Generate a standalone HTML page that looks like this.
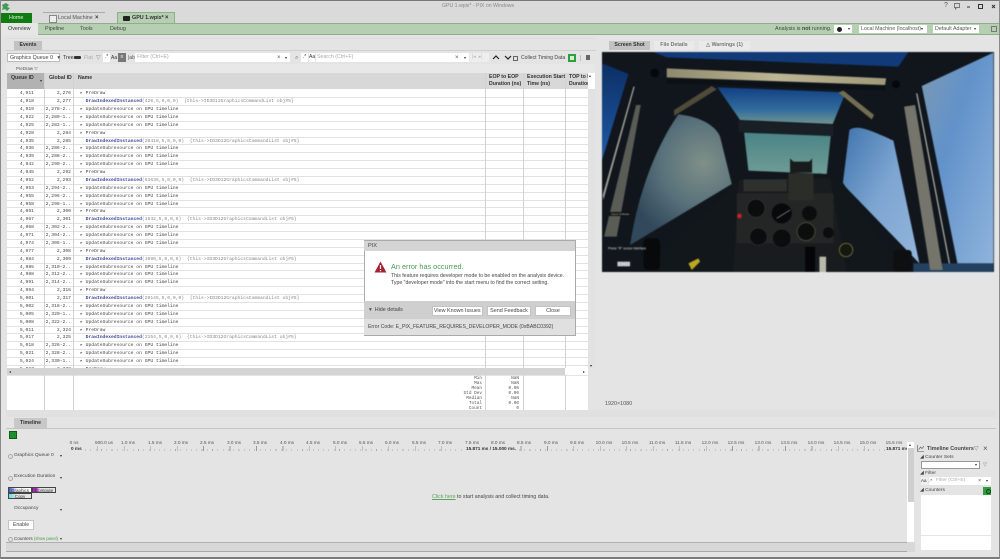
<!DOCTYPE html>
<html><head><meta charset="utf-8"><style>
html,body{margin:0;padding:0}
body{width:1000px;height:559px;overflow:hidden;background:#e4e4e4;position:relative;font-family:"Liberation Sans",sans-serif;color:#333}
div,span,a{position:absolute;white-space:nowrap}
.t{font-size:5.3px;line-height:8px}
.b{font-weight:bold}
.f{background:#fff}
#rows{left:7px;top:89px;width:581px;height:279px;background:#fff;overflow:hidden}
.r{position:relative;height:7.88px;width:581px;box-sizing:border-box;border-bottom:1px solid #e2e2e2;font:4.7px/7.4px "Liberation Mono",monospace;color:#444}
.r b,.r i,.r u{position:absolute;font-weight:normal;font-style:normal;text-decoration:none;top:0}
.r b{right:554px}.r i{right:517px;text-align:right}
.r u{left:73px}
.r em{font-style:normal;color:#3c4a9c;font-weight:bold}.r s{text-decoration:none;color:#888}
.v{width:1px;background:#d2d2d2}
.st{font:4.4px/5px "Liberation Mono",monospace;color:#555;text-align:right}
.tm{top:440px;font-size:4.7px;line-height:6px;color:#555;transform:translateX(-50%)}
.btn{background:#fff;border:1px solid #c4c4c4;box-sizing:border-box;font-size:5.4px;text-align:center;color:#444}
</style></head><body>
<!-- chrome -->
<div style="left:0;top:0;width:1000px;height:1px;background:#777"></div>
<div style="left:0;top:1px;width:1000px;height:22px;background:#dadada"></div>
<svg style="position:absolute;left:2px;top:3px" width="9" height="8" viewBox="0 0 9 8"><path d="M4 0l3 2-2 2 3 1-3 3-2-2-3 1 1-3-1-2z" fill="#3f9a55"/></svg>
<div class="t" style="left:442px;top:2px;color:#888;font-size:5.2px">GPU 1.wpix* - PIX on Windows</div>
<div class="t" style="left:944px;top:2px;font-size:7px;color:#555">?</div>
<svg style="position:absolute;left:954px;top:3px" width="46" height="8" viewBox="0 0 46 8"><path d="M0.5 .5h5v4h-3l-1 1.500v-1.500h-1z" fill="none" stroke="#555" stroke-width=".7"/><path d="M13 4h3" stroke="#333" stroke-width="1"/><rect x="24.500" y="1.500" width="4" height="4" fill="none" stroke="#333"/><path d="M38 2l3 3m0-3l-3 3" stroke="#333"/></svg>
<div style="left:1px;top:13px;width:31px;height:10px;background:#107c10"></div>
<div class="t" style="left:9px;top:14px;color:#e6f3e6;font-size:5.4px">Home</div>
<div style="left:43px;top:12px;width:62px;height:1px;background:#aaa"></div>
<div style="left:49px;top:15px;width:6px;height:6px;border:1px solid #888;background:#eee"></div>
<div class="t" style="left:58px;top:14px;font-size:5.4px;color:#555">Local Machine</div>
<div class="t b" style="left:95px;top:14px;font-size:6px">×</div>
<div style="left:117px;top:12px;width:58px;height:11px;background:#b6cfb2;border:1px solid #8fae8b;border-bottom:0;box-sizing:border-box"></div>
<div style="left:123px;top:15.500px;width:7px;height:5px;background:#222;border-radius:1px"></div>
<div class="t b" style="left:132px;top:14px;font-size:5.4px;color:#333">GPU 1.wpix*</div>
<div class="t b" style="left:165px;top:14px;font-size:6px">×</div>
<div style="left:0;top:22.500px;width:1000px;height:12px;background:#b6cfb2;border-top:1px solid #8fae8b;border-bottom:1px solid #8fae8b;box-sizing:border-box"></div>
<div style="left:1px;top:23px;width:37px;height:12px;background:#e6e6e6"></div>
<div class="t" style="left:8px;top:25px;font-size:5.4px">Overview</div>
<div class="t" style="left:45px;top:25px;font-size:5.4px;color:#444">Pipeline</div>
<div class="t" style="left:80px;top:25px;font-size:5.4px;color:#444">Tools</div>
<div class="t" style="left:110px;top:25px;font-size:5.4px;color:#444">Debug</div>
<div class="t" style="left:775px;top:25px;font-size:5.4px;color:#444">Analysis is <b>not</b> running.</div>
<div class="f" style="left:834px;top:25px;width:18px;height:8px"></div>
<div style="left:837px;top:26.500px;width:5px;height:5px;border-radius:50%;background:#222"></div>
<div class="t" style="left:848px;top:25px;font-size:4px">▾</div>
<div class="f t" style="left:859px;top:25px;width:68px;height:7.500px;font-size:5.300px;color:#555;text-indent:2px">Local Machine (localhost)</div>
<div class="t" style="left:921px;top:25px;font-size:4px">▾</div>
<div class="f t" style="left:933px;top:25px;width:46px;height:7.500px;font-size:5.300px;color:#555;text-indent:2px">Default Adapter</div>
<div class="t" style="left:974px;top:25px;font-size:4px">▾</div>
<div style="left:991px;top:26px;width:4px;height:4px;border:1px solid #777"></div>

<!-- events panel -->
<div style="left:6px;top:38px;width:589px;height:1px;background:#dcdcdc"></div>
<div class="t b" style="left:14px;top:41px;width:28px;height:9px;background:#c2c2c2;font-size:5.200px;text-align:center;color:#333">Events</div>
<div style="left:6px;top:50px;width:590px;height:1px;background:#d0d0d0"></div>
<div class="f t" style="left:7px;top:53px;width:53px;height:9px;border:1px solid #bbb;box-sizing:border-box;font-size:5.300px;color:#444;text-indent:2px;line-height:8px">Graphics Queue 0 &nbsp; ▾</div>
<div class="t" style="left:63px;top:54px;font-size:5.300px">Tree</div>
<div style="left:74px;top:56px;width:7px;height:3px;background:#333;border-radius:1px"></div>
<div class="t" style="left:84px;top:54px;font-size:5.300px;color:#aaa">Flat</div>
<div class="t" style="left:96px;top:53.500px;font-size:6px;color:#888">▽</div>
<div class="f t" style="left:103px;top:53px;width:7px;height:9px;font-size:5px;text-align:center">.*</div>
<div class="t" style="left:111px;top:54px;font-size:5px">Aa</div>
<div class="t" style="left:118px;top:53px;width:8px;height:9px;background:#777;color:#fff;font-size:5px;text-align:center">≡</div>
<div class="t" style="left:128px;top:53.500px;font-size:5px;color:#555">|ab|</div>
<div class="f t" style="left:135px;top:53px;width:155px;height:9px;font-size:5.300px;color:#aaa;text-indent:2px">Filter (Ctrl+E)</div>
<div class="t" style="left:277px;top:54px;font-size:6px;color:#555">×</div>
<div class="t" style="left:285px;top:54px;font-size:4px">▾</div>
<div class="t" style="left:295px;top:54px;font-size:6px;color:#777">⌕</div>
<div class="f t" style="left:301px;top:53px;width:7px;height:9px;font-size:5px;text-align:center">.*</div>
<div class="f t" style="left:309px;top:53px;width:6px;height:9px;font-size:5px">Aa</div>
<div class="f t" style="left:316px;top:53px;width:153px;height:9px;font-size:5.300px;color:#aaa;text-indent:1px">Search (Ctrl+F)</div>
<div class="t" style="left:455px;top:54px;font-size:6px;color:#555">×</div>
<div class="t" style="left:464px;top:54px;font-size:4px">▾</div>
<div class="t" style="left:470px;top:53px;width:19px;height:9px;color:#bbb;font-size:5px;text-indent:2px;background:#eee">|◂ &nbsp;▸|</div>
<svg style="position:absolute;left:492px;top:54px" width="20" height="7" viewBox="0 0 20 7"><path d="M1 5l3-3 3 3M13 2l3 3 3-3" fill="none" stroke="#222" stroke-width="1.200"/></svg>
<div style="left:513px;top:56px;width:3px;height:3px;border:1px solid #666"></div>
<div class="t" style="left:521px;top:54px;font-size:5.100px;color:#444">Collect Timing Data</div>
<div style="left:568px;top:54px;width:8px;height:8px;background:#2f9e3f"></div>
<div style="left:570px;top:56px;width:4px;height:4px;background:#d5ecd5"></div>
<div style="left:580px;top:55px;width:1px;height:6px;background:#bbb"></div>
<div style="left:586px;top:55px;width:4px;height:5px;background:#666"></div>
<div style="left:6px;top:64px;width:589px;height:9px;background:#e8e8e8"></div>
<div class="t" style="left:16px;top:64.500px;font-size:4.400px;color:#555">PreDraw ▽</div>
<div style="left:7px;top:73px;width:581px;height:16px;background:#d8d8d8"></div>
<div style="left:7px;top:73px;width:37px;height:16px;background:#b2b2b2"></div>
<div class="t b" style="left:11px;top:73.500px;font-size:5.200px">Queue ID</div>
<div class="t" style="left:40px;top:77px;font-size:4px">▾</div>
<div class="t b" style="left:49px;top:73.500px;font-size:5.200px">Global ID</div>
<div class="t b" style="left:78px;top:73.500px;font-size:5.200px">Name</div>
<div class="t b" style="left:489px;top:73.500px;font-size:5.200px;line-height:7px;white-space:pre">EOP to EOP
Duration (ns)</div>
<div class="t b" style="left:527px;top:73.500px;font-size:5.200px;line-height:7px;white-space:pre">Execution Start
Time (ns)</div>
<div class="t b" style="left:569px;top:73.500px;font-size:5.200px;line-height:7px;white-space:pre;width:19px;overflow:hidden">TOP to EOP
Duration</div>
<div class="f" style="left:588px;top:73px;width:7px;height:16px"></div>
<div style="left:588px;top:89px;width:7px;height:279px;background:#e2e2e2"></div>
<div class="t" style="left:589px;top:72px;font-size:4px">▴</div>
<div id="rows"><div style="position:relative;height:1.300px"></div>
<div class="r"><b>4,911</b><i>2,276</i><u>▸ PreDraw</u></div>
<div class="r"><b>4,918</b><i>2,277</i><u>&nbsp; <em>DrawIndexedInstanced</em><s>(420,5,0,0,0) &nbsp;{this-&gt;ID3D12GraphicsCommandList obj#5}</s></u></div>
<div class="r"><b>4,919</b><i>2,278-2..</i><u>▸ UpdateSubresource on GPU timeline</u></div>
<div class="r"><b>4,922</b><i>2,280-1..</i><u>▸ UpdateSubresource on GPU timeline</u></div>
<div class="r"><b>4,925</b><i>2,282-1..</i><u>▸ UpdateSubresource on GPU timeline</u></div>
<div class="r"><b>4,928</b><i>2,284</i><u>▸ PreDraw</u></div>
<div class="r"><b>4,935</b><i>2,285</i><u>&nbsp; <em>DrawIndexedInstanced</em><s>(20418,5,0,0,0) &nbsp;{this-&gt;ID3D12GraphicsCommandList obj#5}</s></u></div>
<div class="r"><b>4,936</b><i>2,286-2..</i><u>▸ UpdateSubresource on GPU timeline</u></div>
<div class="r"><b>4,939</b><i>2,288-2..</i><u>▸ UpdateSubresource on GPU timeline</u></div>
<div class="r"><b>4,942</b><i>2,290-2..</i><u>▸ UpdateSubresource on GPU timeline</u></div>
<div class="r"><b>4,945</b><i>2,292</i><u>▸ PreDraw</u></div>
<div class="r"><b>4,952</b><i>2,293</i><u>&nbsp; <em>DrawIndexedInstanced</em><s>(63636,5,0,0,0) &nbsp;{this-&gt;ID3D12GraphicsCommandList obj#5}</s></u></div>
<div class="r"><b>4,953</b><i>2,294-2..</i><u>▸ UpdateSubresource on GPU timeline</u></div>
<div class="r"><b>4,955</b><i>2,296-2..</i><u>▸ UpdateSubresource on GPU timeline</u></div>
<div class="r"><b>4,958</b><i>2,298-1..</i><u>▸ UpdateSubresource on GPU timeline</u></div>
<div class="r"><b>4,961</b><i>2,300</i><u>▸ PreDraw</u></div>
<div class="r"><b>4,967</b><i>2,301</i><u>&nbsp; <em>DrawIndexedInstanced</em><s>(1632,5,0,0,0) &nbsp;{this-&gt;ID3D12GraphicsCommandList obj#5}</s></u></div>
<div class="r"><b>4,968</b><i>2,302-2..</i><u>▸ UpdateSubresource on GPU timeline</u></div>
<div class="r"><b>4,971</b><i>2,304-2..</i><u>▸ UpdateSubresource on GPU timeline</u></div>
<div class="r"><b>4,974</b><i>2,306-1..</i><u>▸ UpdateSubresource on GPU timeline</u></div>
<div class="r"><b>4,977</b><i>2,308</i><u>▸ PreDraw</u></div>
<div class="r"><b>4,984</b><i>2,309</i><u>&nbsp; <em>DrawIndexedInstanced</em><s>(1080,5,0,0,0) &nbsp;{this-&gt;ID3D12GraphicsCommandList obj#5}</s></u></div>
<div class="r"><b>4,985</b><i>2,310-2..</i><u>▸ UpdateSubresource on GPU timeline</u></div>
<div class="r"><b>4,988</b><i>2,312-2..</i><u>▸ UpdateSubresource on GPU timeline</u></div>
<div class="r"><b>4,991</b><i>2,314-2..</i><u>▸ UpdateSubresource on GPU timeline</u></div>
<div class="r"><b>4,994</b><i>2,316</i><u>▸ PreDraw</u></div>
<div class="r"><b>5,001</b><i>2,317</i><u>&nbsp; <em>DrawIndexedInstanced</em><s>(29145,5,0,0,0) &nbsp;{this-&gt;ID3D12GraphicsCommandList obj#5}</s></u></div>
<div class="r"><b>5,002</b><i>2,318-2..</i><u>▸ UpdateSubresource on GPU timeline</u></div>
<div class="r"><b>5,005</b><i>2,320-1..</i><u>▸ UpdateSubresource on GPU timeline</u></div>
<div class="r"><b>5,008</b><i>2,322-2..</i><u>▸ UpdateSubresource on GPU timeline</u></div>
<div class="r"><b>5,011</b><i>2,324</i><u>▸ PreDraw</u></div>
<div class="r"><b>5,017</b><i>2,325</i><u>&nbsp; <em>DrawIndexedInstanced</em><s>(2154,5,0,0,0) &nbsp;{this-&gt;ID3D12GraphicsCommandList obj#5}</s></u></div>
<div class="r"><b>5,018</b><i>2,326-2..</i><u>▸ UpdateSubresource on GPU timeline</u></div>
<div class="r"><b>5,021</b><i>2,328-2..</i><u>▸ UpdateSubresource on GPU timeline</u></div>
<div class="r"><b>5,024</b><i>2,330-1..</i><u>▸ UpdateSubresource on GPU timeline</u></div>
<div class="r"><b>5,027</b><i>2,332</i><u>▸ PreDraw</u></div>
</div>
<div class="v" style="left:44px;top:73px;height:295px"></div>
<div class="v" style="left:73px;top:73px;height:295px"></div>
<div class="v" style="left:485px;top:73px;height:295px"></div>
<div class="v" style="left:523px;top:73px;height:295px"></div>
<div class="v" style="left:565px;top:73px;height:295px"></div>
<div style="left:7px;top:368px;width:558px;height:7px;background:#d4d4d4"></div>
<div class="f" style="left:565px;top:368px;width:23px;height:7px"></div>
<div class="t" style="left:9px;top:368px;font-size:4px">◂</div>
<div class="t" style="left:583px;top:368px;font-size:4px">▸</div>
<div class="t" style="left:590px;top:362px;font-size:4px">▾</div>
<div class="f" style="left:7px;top:375.500px;width:581px;height:34.500px"></div>
<div class="v" style="left:44px;top:375px;height:35px"></div>
<div class="v" style="left:73px;top:375px;height:35px"></div>
<div class="v" style="left:485px;top:375px;height:35px"></div>
<div class="v" style="left:523px;top:375px;height:35px"></div>
<div class="v" style="left:565px;top:375px;height:35px"></div>
<div class="st" style="left:462px;top:375.500px;width:20px;white-space:pre">Min
Max
Mean
Std Dev
Median
Total
Count</div>
<div class="st" style="left:499px;top:375.500px;width:20px;white-space:pre">NaN
NaN
0.00
0.00
NaN
0.00
0</div>
<div style="left:6px;top:410px;width:990px;height:7px;background:#e0e0e0"></div>

<!-- screenshot panel -->
<div class="t b" style="left:609px;top:41px;width:41px;height:9px;background:#c2c2c2;font-size:5.200px;text-align:center">Screen Shot</div>
<div class="t b" style="left:654px;top:41px;width:40px;height:9px;background:#eaeaea;font-size:5.200px;text-align:center;color:#777">File Details</div>
<div class="t b" style="left:699px;top:41px;width:51px;height:9px;background:#eaeaea;font-size:5.200px;text-align:center;color:#777">△ Warnings (1)</div>
<svg style="position:absolute;left:602px;top:52px;filter:blur(.5px)" width="391.500" height="220" viewBox="6 6 1174 660">
<defs>
<radialGradient id="c1" gradientUnits="userSpaceOnUse" cx="310" cy="340" r="240"><stop offset="0" stop-color="#7f9088"/><stop offset=".55" stop-color="#57707a"/><stop offset="1" stop-color="#31495a"/></radialGradient>
<linearGradient id="c2" x1="0" y1="0" x2="0" y2="1"><stop offset="0" stop-color="#123f84"/><stop offset=".6" stop-color="#326c9c"/><stop offset="1" stop-color="#6f9490"/></linearGradient>
<linearGradient id="c3" x1="0" y1="0" x2="0" y2="1"><stop offset="0" stop-color="#4b8486"/><stop offset="1" stop-color="#6f9c96"/></linearGradient>
<linearGradient id="s1" x1="0" y1="0" x2="1" y2="1"><stop offset="0" stop-color="#3f74ad"/><stop offset=".5" stop-color="#7ea6d2"/><stop offset="1" stop-color="#93b6dc"/></linearGradient>
<linearGradient id="s2" x1="0" y1="0" x2="1" y2="1"><stop offset="0" stop-color="#7c9ab2"/><stop offset=".4" stop-color="#6292ca"/><stop offset="1" stop-color="#8fb4dc"/></linearGradient>
<linearGradient id="l" x1="0" y1="0" x2="0" y2="1"><stop offset="0" stop-color="#0c2f66"/><stop offset="1" stop-color="#1f5ca8"/></linearGradient>
<linearGradient id="cr" x1="0" y1="0" x2="1" y2="0"><stop offset="0" stop-color="#8f8a6e"/><stop offset=".5" stop-color="#bdb694"/><stop offset="1" stop-color="#a09a7a"/></linearGradient>
</defs>
<rect x="0" y="0" width="1200" height="675" fill="#10161c"/>
<polygon points="160,6 925,6 895,50 200,22" fill="#103a78"/>
<polygon points="6,40 85,72 6,330" fill="url(#l)"/>
<path d="M235,193 C300,200 345,225 360,260 L395,402 L90,585 C110,450 160,300 235,193z" fill="url(#c1)"/>
<polygon points="352,112 737,127 698,222 420,210" fill="url(#c2)"/>
<polygon points="432,248 692,258 680,372 445,362" fill="url(#c3)"/>
<path d="M748,240 C770,225 800,235 880,272 L958,640 L728,402z" fill="url(#s1)"/>
<polygon points="965,108 1180,8 1180,640 1072,640" fill="url(#s2)"/>
<polygon points="940,640 1180,640 1180,666 940,666" fill="#24405f"/>
<polygon points="200,55 858,85 855,105 200,82" fill="url(#cr)"/>
<polygon points="200,86 855,108 855,122 200,100" fill="#0c1116"/>
<polygon points="108,165 122,165 50,560 12,560" fill="#5a5c56"/>
<polygon points="912,170 945,165 1028,660 990,660" fill="#75756c"/>
<polygon points="100,110 104,110 10,450 8,435" fill="#a0a098"/>
<polygon points="948,130 952,130 1050,640 1046,640" fill="#a8a9a2"/>
<polygon points="222,180 335,108 350,118 222,198" fill="#4f4b38"/>
<polygon points="715,128 730,122 822,195 815,208" fill="#736e50"/>
<polygon points="415,212 700,226 700,258 415,245" fill="#182026"/>
<circle cx="164" cy="69" r="13" fill="#05080a"/><circle cx="888" cy="103" r="12" fill="#05080a"/>
<polygon points="130,666 400,405 660,370 730,400 900,666" fill="#12171b"/>
<polygon points="415,390 690,385 740,666 400,666" fill="#191c1e"/>
<rect x="430" y="388" width="130" height="36" fill="#2e302e"/>
<rect x="410" y="430" width="290" height="150" fill="#232625"/>
<rect x="565" y="370" width="75" height="80" fill="#2b2d28"/>
<polygon points="570,325 580,335 628,335 636,325 636,368 570,368" fill="#181b1c"/>
<circle cx="468" cy="475" r="27" fill="#0a0c0d" stroke="#3a3a3a" stroke-width="2"/>
<circle cx="545" cy="490" r="30" fill="#08090a"/>
<path d="M530,505L570,480" stroke="#999" stroke-width="2"/>
<circle cx="628" cy="490" r="22" fill="#0a0c0d"/>
<circle cx="475" cy="560" r="26" fill="#0a0c0d" stroke="#333" stroke-width="2"/>
<circle cx="545" cy="565" r="28" fill="#0a0c0d" stroke="#2e2e2e" stroke-width="2"/>
<circle cx="618" cy="545" r="27" fill="#0c0e0d" stroke="#4a4838" stroke-width="3"/>
<circle cx="685" cy="548" r="16" fill="#0a0c0d"/>
<circle cx="738" cy="600" r="20" fill="#15180f" stroke="#8f8d4c" stroke-width="2"/>
<circle cx="418" cy="498" r="7" fill="#c9202a"/>
<rect x="130" y="565" width="50" height="95" rx="14" fill="#08090a"/>
<rect x="880" y="600" width="55" height="66" rx="10" fill="#0d0f10"/>
<rect x="615" y="590" width="30" height="76" fill="#050607"/><rect x="658" y="620" width="20" height="46" fill="#b9b8ab"/>
<polygon points="265,640 295,625 300,635 275,660" fill="#b9a820"/>
<rect x="52" y="635" width="38" height="14" fill="#c8cacc"/>
<rect x="28" y="486" width="65" height="12" fill="#111"/>
<text x="33" y="495" font-size="8" fill="#bbb" font-family="Liberation Sans,sans-serif">Game Software</text>
<text x="24" y="598" font-size="10" fill="#ddd" font-family="Liberation Sans,sans-serif">Press "R" cursor interface</text>
</svg>
<div class="t" style="left:605px;top:400px;font-size:5.400px;color:#555">1920×1080</div>

<!-- dialog -->
<div style="left:363.500px;top:240px;width:212.500px;height:96px;background:#fff;border:1px solid #aaa;box-sizing:border-box"></div>
<div class="t" style="left:364px;top:241px;width:211px;height:10px;background:#d4d4d4;font-size:5.600px;line-height:10px;text-indent:4px;color:#444">PIX</div>
<svg style="position:absolute;left:374px;top:261px" width="13" height="12" viewBox="0 0 13 12"><path d="M6.500 .5L12.500 11.500H.5z" fill="#a82332"/><path d="M6.500 4v4M6.500 9v1.200" stroke="#fff" stroke-width="1.200"/></svg>
<div class="t" style="left:391px;top:262px;font-size:7.300px;line-height:9px;color:#4a9a5a">An error has occurred.</div>
<div class="t" style="left:391px;top:273px;font-size:5.200px;line-height:7px;color:#444;white-space:pre">This feature requires developer mode to be enabled on the analysis device.
Type "developer mode" into the start menu to find the correct setting.</div>
<div style="left:364px;top:301px;width:211px;height:18px;background:#cfcfcf"></div>
<div class="t" style="left:369px;top:306px;font-size:5.400px;color:#444">▾ &nbsp;Hide details</div>
<div class="btn t" style="left:431.500px;top:305.500px;width:51.500px;height:10px;line-height:9px">View Known Issues</div>
<div class="btn t" style="left:487px;top:305.500px;width:44px;height:10px;line-height:9px">Send Feedback</div>
<div class="btn t" style="left:535px;top:305.500px;width:36px;height:10px;line-height:9px">Close</div>
<div style="left:364px;top:319px;width:211px;height:16px;background:#e0e0e0"></div>
<div class="t" style="left:368px;top:323px;font-size:5.100px;color:#444">Error Code: E_PIX_FEATURE_REQUIRES_DEVELOPER_MODE (0xBABC0392)</div>

<!-- timeline -->
<div class="t b" style="left:14px;top:418px;width:33px;height:10px;background:#c8c8c8;font-size:5.200px;line-height:10px;text-align:center">Timeline</div>
<div style="left:6px;top:428px;width:990px;height:1px;background:#c4c4c4"></div>
<div style="left:9px;top:431px;width:8px;height:8px;background:#1e8f2e;border:1px solid #0d5c1a;box-sizing:border-box"></div>
<div class="tm" style="left:74px">0 ns</div><div class="tm" style="left:104px">500.0 us</div><div class="tm" style="left:128px">1.0 ms</div><div class="tm" style="left:155px">1.5 ms</div><div class="tm" style="left:181px">2.0 ms</div><div class="tm" style="left:207px">2.5 ms</div><div class="tm" style="left:234px">3.0 ms</div><div class="tm" style="left:260px">3.5 ms</div><div class="tm" style="left:287px">4.0 ms</div><div class="tm" style="left:313px">4.5 ms</div><div class="tm" style="left:340px">5.0 ms</div><div class="tm" style="left:366px">5.5 ms</div><div class="tm" style="left:392px">6.0 ms</div><div class="tm" style="left:419px">6.5 ms</div><div class="tm" style="left:445px">7.0 ms</div><div class="tm" style="left:472px">7.5 ms</div><div class="tm" style="left:498px">8.0 ms</div><div class="tm" style="left:524px">8.5 ms</div><div class="tm" style="left:551px">9.0 ms</div><div class="tm" style="left:577px">9.5 ms</div><div class="tm" style="left:604px">10.0 ms</div><div class="tm" style="left:630px">10.5 ms</div><div class="tm" style="left:657px">11.0 ms</div><div class="tm" style="left:683px">11.5 ms</div><div class="tm" style="left:710px">12.0 ms</div><div class="tm" style="left:736px">12.5 ms</div><div class="tm" style="left:763px">13.0 ms</div><div class="tm" style="left:789px">13.5 ms</div><div class="tm" style="left:816px">14.0 ms</div><div class="tm" style="left:842px">14.5 ms</div><div class="tm" style="left:868px">15.0 ms</div><div class="tm" style="left:894px">15.5 ms</div>
<div style="left:80px;top:449px;width:826px;height:2px;background:repeating-linear-gradient(90deg,#aaa 0,#aaa .6px,transparent .6px,transparent 5.290px)"></div>
<div style="left:71px;top:446px;width:835px;height:5px;background:repeating-linear-gradient(90deg,#999 0,#999 .7px,transparent .7px,transparent 26.450px)"></div>
<div class="t b" style="left:71px;top:445.500px;font-size:4.700px;line-height:6px;background:#e4e4e4">0 ms</div>
<div class="t b" style="left:466px;top:445.500px;font-size:4.700px;line-height:6px;background:#e4e4e4">15.871 ms / 15.000 ms.</div>
<div class="t b" style="left:886px;top:445.500px;font-size:4.700px;line-height:6px;background:#e4e4e4">15.871 ms</div>
<div style="left:8px;top:454px;width:3px;height:3px;border:.5px solid #aaa;border-radius:50%"></div>
<div class="t" style="left:14px;top:451.500px;font-size:4.900px;color:#444">Graphics Queue 0</div>
<div class="t" style="left:60px;top:452px;font-size:4px">▾</div>
<div style="left:8px;top:476px;width:3px;height:3px;border:.5px solid #aaa;border-radius:50%"></div>
<div class="t" style="left:14px;top:473px;font-size:4.900px;color:#444">Execution Duration</div>
<div class="t" style="left:60px;top:473.500px;font-size:4px">▾</div>
<div class="t" style="left:8px;top:487px;width:24px;height:5.500px;border:.6px solid #444;box-sizing:border-box;font-size:4.500px;line-height:5px;text-align:center;background:linear-gradient(90deg,#3a4fd0,#fff 35%)">Graphics</div>
<div class="t" style="left:32px;top:487px;width:24px;height:5.500px;border:.6px solid #444;box-sizing:border-box;font-size:4.500px;line-height:5px;text-align:center;background:linear-gradient(90deg,#b020c0 15%,#e4e4e4 30%)">Compute</div>
<div class="t" style="left:8px;top:492.500px;width:24px;height:6px;border:.6px solid #444;box-sizing:border-box;font-size:4.500px;line-height:5px;text-align:center;background:linear-gradient(90deg,#60e0e0,#e4e4e4 35%)">Copy</div>
<div class="t" style="left:14px;top:505px;font-size:4.900px;color:#444">Occupancy</div>
<div class="t" style="left:60px;top:505.500px;font-size:4px">▾</div>
<div class="btn t" style="left:8px;top:519.500px;width:26px;height:10px;line-height:9px;font-size:5.200px">Enable</div>
<div style="left:8px;top:537px;width:3px;height:3px;border:.5px solid #aaa;border-radius:50%"></div>
<div class="t" style="left:14px;top:534.500px;font-size:4.600px;color:#444">Counters</div>
<div class="t" style="left:34px;top:534.500px;font-size:4.200px;color:#4a9a4a">(show panel)</div>
<div class="t" style="left:60px;top:535px;font-size:4px">▾</div>
<div class="t" style="left:432px;top:493px;font-size:5.300px;color:#444"><span style="position:static;color:#5aa55a;text-decoration:underline">Click here</span> to start analysis and collect timing data.</div>
<div class="f" style="left:907px;top:442px;width:7px;height:100px"></div>
<div style="left:908px;top:448px;width:6px;height:54px;background:#cfcfcf"></div>
<div class="t" style="left:909px;top:441px;font-size:4px">▴</div>
<div class="t" style="left:909px;top:545px;font-size:4px">▾</div>
<div style="left:6px;top:542px;width:901px;height:10px;background:#d8d8d8;border-top:1px solid #b0b0b0;border-bottom:1px solid #a8a8a8;box-sizing:border-box"></div>
<div style="left:907px;top:542px;width:8px;height:10px;background:#d8d8d8"></div>
<div style="left:0;top:557px;width:1000px;height:2px;background:#7b7b7b"></div>
<div style="left:0;top:0;width:1px;height:559px;background:#8a8a8a"></div>
<div style="left:999px;top:0;width:1px;height:559px;background:#8a8a8a"></div>

<!-- counters panel -->
<svg style="position:absolute;left:917px;top:445px" width="7" height="7" viewBox="0 0 7 7"><path d="M.5 0v6.500H7M1.500 5l2-3 1.500 1.500L7 1" fill="none" stroke="#555" stroke-width=".6"/></svg>
<div class="t b" style="left:927px;top:445px;font-size:5.400px;color:#444">Timeline Counters</div>
<div class="t" style="left:974px;top:444.500px;font-size:6px;color:#777">▽</div>
<div class="t" style="left:983px;top:444.500px;font-size:8px;color:#555">×</div>
<div class="t" style="left:920px;top:454px;font-size:4.900px;color:#444">◢ Counter Sets</div>
<div class="f" style="left:921px;top:461px;width:59px;height:8px;border:.6px solid #999;box-sizing:border-box"></div>
<div class="t" style="left:975px;top:461px;font-size:4px">▾</div>
<div class="t" style="left:983px;top:460.500px;font-size:5px;color:#777">▽</div>
<div class="t" style="left:920px;top:470px;font-size:4.900px;color:#444">◢ Filter</div>
<div class="t" style="left:921px;top:477px;width:7px;height:8px;background:#eee;font-size:4.500px">Aa</div>
<div class="f t" style="left:929px;top:477px;width:6px;height:8px;font-size:4.500px">.*</div>
<div class="f t" style="left:935px;top:477px;width:56px;height:8px;font-size:4.900px;color:#aaa;text-indent:1px">Filter (Ctrl+E)</div>
<div class="t" style="left:978px;top:477px;font-size:5.500px;color:#555">×</div>
<div class="t" style="left:986px;top:477px;font-size:4px">▾</div>
<div class="t" style="left:920px;top:487px;font-size:4.900px;color:#444">◢ Counters</div>
<div style="left:983px;top:487px;width:8px;height:7.500px;background:#2f9e3f"></div>
<div style="left:985.500px;top:489px;width:3px;height:3px;border:.6px solid #0b3d12;border-radius:50%"></div>
<div class="f" style="left:921px;top:495px;width:70px;height:40px"></div>
<div class="f" style="left:921px;top:536px;width:70px;height:14px"></div>
</body></html>
